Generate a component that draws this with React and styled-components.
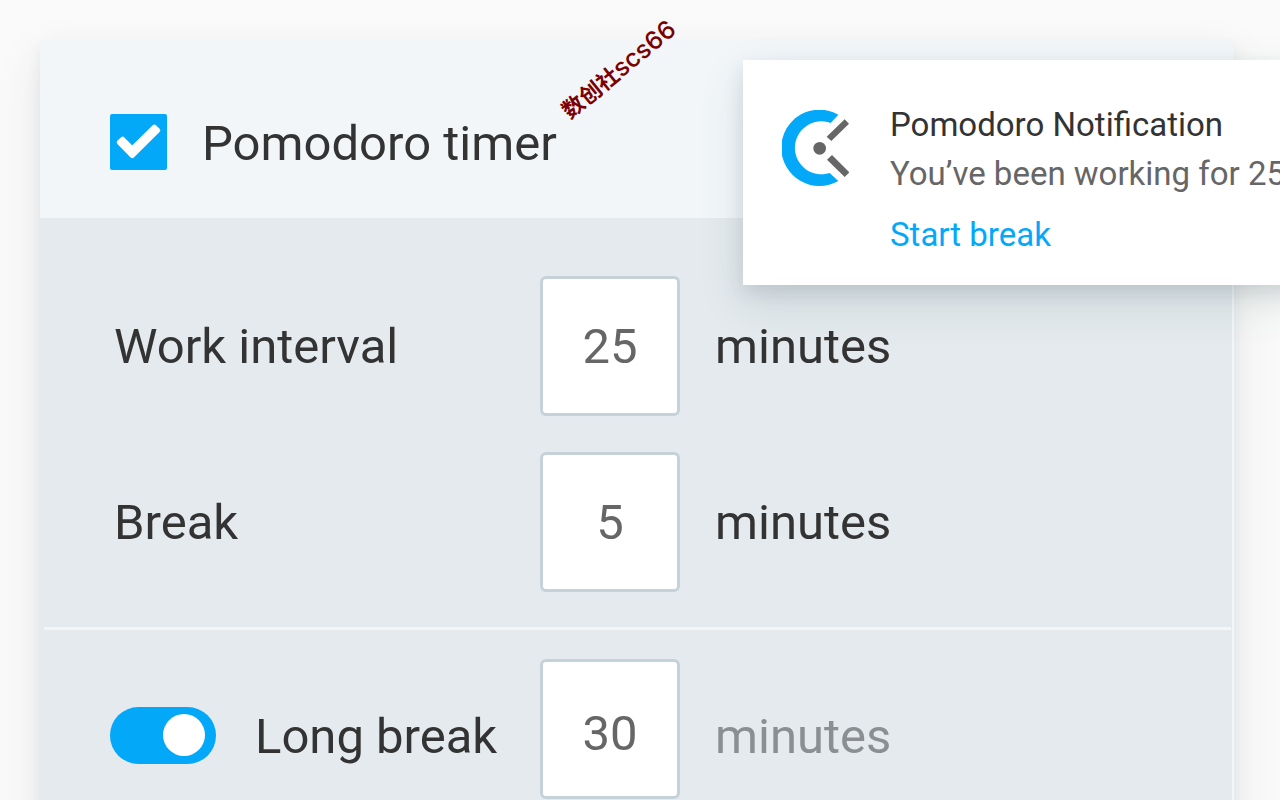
import React, { useState } from "react";
import styled, { createGlobalStyle } from "styled-components";

const COLORS = {
  primary: "#03a9f8",
  text: "#333333",
  muted: "#666666",
  panel: "#e4eaee",
  header: "#f2f6f9",
  border: "#c6d2d9",
};

const IntervalField = ({ id, value, onChange, low }) => {
  return (
    <NumberInput
      id={id}
      type="text"
      inputMode="numeric"
      value={value}
      $low={low}
      onChange={(e) => onChange(e.target.value)}
    />
  );
};

const ClockLogo = () => (
  <Logo viewBox="126 208 201 231" aria-hidden="true">
    <path
      d="M295 222A114.5 114.5 0 1 0 295 421L269 397A79.5 79.5 0 1 1 272 247Z"
      fill={COLORS.primary}
    />
    <path d="M314 236L327 249L274 301L260 288Z" fill={COLORS.muted} />
    <path d="M276 343L328 395L314 409L261 357Z" fill={COLORS.muted} />
    <circle cx="239" cy="323" r="19" fill={COLORS.muted} />
  </Logo>
);

const App = () => {
  const [enabled, setEnabled] = useState(true);
  const [longBreak, setLongBreak] = useState(true);
  const [work, setWork] = useState("25");
  const [rest, setRest] = useState("5");
  const [longRest, setLongRest] = useState("30");

  return (
    <Page>
      <GlobalStyle />
      <Card>
        <CardHeader>
          <CheckWrapper>
            <Checkbox
              id="pomodoro"
              type="checkbox"
              checked={enabled}
              onChange={() => setEnabled(!enabled)}
            />
            {enabled && (
              <Tick viewBox="271 281 170 170" aria-hidden="true">
                <path
                  d="M297 367L308 357L337 386L404 320L415 331L337 408Z"
                  fill="white"
                  stroke="white"
                  strokeWidth="14"
                  strokeLinejoin="round"
                />
              </Tick>
            )}
          </CheckWrapper>
          <Title htmlFor="pomodoro">Pomodoro timer</Title>
        </CardHeader>
        <Section>
          <Row>
            <LabelCell $indent>
              <label htmlFor="work">Work interval</label>
            </LabelCell>
            <IntervalField id="work" value={work} onChange={setWork} />
            <Unit>minutes</Unit>
          </Row>
          <Row>
            <LabelCell $indent>
              <label htmlFor="break">Break</label>
            </LabelCell>
            <IntervalField id="break" value={rest} onChange={setRest} />
            <Unit>minutes</Unit>
          </Row>
        </Section>
        <Divider />
        <Section $compact>
          <Row>
            <LabelCell $low>
              <Toggle
                id="long-toggle"
                type="checkbox"
                role="switch"
                aria-label="Long break"
                checked={longBreak}
                onChange={() => setLongBreak(!longBreak)}
              />
              <label htmlFor="long">Long break</label>
            </LabelCell>
            <IntervalField id="long" value={longRest} onChange={setLongRest} low />
            <Unit $low $faded>minutes</Unit>
          </Row>
        </Section>
      </Card>
      <Toast role="status">
        <ClockLogo />
        <ToastBody>
          <ToastTitle>Pomodoro Notification</ToastTitle>
          <ToastText>You’ve been working for 25 minutes</ToastText>
          <ToastAction type="button">Start break</ToastAction>
        </ToastBody>
      </Toast>
      <Watermark>
        <b>数创社</b>scs66
      </Watermark>
    </Page>
  );
};

const GlobalStyle = createGlobalStyle`
  * {
    box-sizing: border-box;
  }
  body {
    margin: 0;
    background: #fafafa;
    color: ${COLORS.text};
    font-family: Roboto, "Noto Sans CJK SC", sans-serif;
  }
`;

const Page = styled.main`
  position: relative;
  height: 100vh;
  padding: 40px 46px 0 40px;
  overflow: hidden;
`;

const Card = styled.section`
  background: ${COLORS.panel};
  box-shadow: 0 18px 44px rgba(40, 60, 50, 0.1), 0 8px 14px rgba(40, 50, 70, 0.06);
  border-right: 2px solid ${COLORS.header};
  font-size: 49px;
  line-height: 60px;
`;

const CardHeader = styled.header`
  display: flex;
  align-items: center;
  gap: 35px;
  height: 178px;
  padding: 26px 70px 0;
  background: ${COLORS.header};
`;

const CheckWrapper = styled.span`
  display: grid;
  width: 57px;
  height: 56px;
`;

const Checkbox = styled.input`
  appearance: none;
  grid-area: 1 / 1;
  margin: 0;
  border: 3px solid ${COLORS.primary};
  border-radius: 2px;
  background: white;
  &:checked {
    background: ${COLORS.primary};
  }
`;

const Tick = styled.svg`
  grid-area: 1 / 1;
  width: 57px;
  height: 56px;
  pointer-events: none;
`;

const Title = styled.label`
  padding-top: 3px;
  white-space: nowrap;
`;

const Section = styled.div`
  display: flex;
  flex-direction: column;
  gap: 36px;
  padding: ${(props) => (props.$compact ? "29px 70px 36px" : "58px 70px 35px")};
`;

const Row = styled.div`
  display: grid;
  grid-template-columns: 430px 140px 1fr;
  align-items: center;
`;

const LabelCell = styled.div`
  display: flex;
  align-items: center;
  gap: 36px;
  padding-left: ${(props) => (props.$indent ? "4px" : "0")};
  padding-top: ${(props) => (props.$low ? "12px" : "2px")};
  white-space: nowrap;
  label {
    padding-top: ${(props) => (props.$indent ? "0" : "4px")};
    padding-left: ${(props) => (props.$indent ? "0" : "3px")};
  }
`;

const NumberInput = styled.input`
  width: 140px;
  height: 140px;
  padding: ${(props) => (props.$low ? "8px 0 0" : "0")};
  border: 3px solid ${COLORS.border};
  border-radius: 6px;
  background: white;
  color: ${COLORS.muted};
  font: inherit;
  text-align: center;
`;

const Unit = styled.span`
  padding-left: 35px;
  padding-top: ${(props) => (props.$low ? "16px" : "2px")};
  color: ${(props) => (props.$faded ? "#8c8f91" : COLORS.text)};
`;

const Divider = styled.hr`
  height: 3px;
  margin: 0 1px 0 4px;
  border: none;
  background: ${COLORS.header};
`;

const Toggle = styled.input`
  appearance: none;
  display: flex;
  align-items: center;
  justify-content: flex-start;
  width: 106px;
  height: 57px;
  margin: 0;
  padding: 0 11px;
  border-radius: 29px;
  background: ${COLORS.border};
  &::before {
    content: "";
    width: 42px;
    height: 42px;
    border-radius: 50%;
    background: white;
  }
  &:checked {
    justify-content: flex-end;
    background: ${COLORS.primary};
  }
`;

const Toast = styled.aside`
  position: absolute;
  top: 60px;
  left: 743px;
  display: flex;
  align-items: flex-start;
  gap: 41px;
  height: 225px;
  padding: 40px 39px;
  background: white;
  box-shadow: 0 18px 44px rgba(40, 80, 70, 0.12), 0 8px 18px rgba(40, 50, 80, 0.12);
  white-space: nowrap;
`;

const Logo = styled.svg`
  flex: none;
  width: 67px;
  height: 77px;
  margin-top: 10px;
`;

const ToastBody = styled.div`
  display: flex;
  flex-direction: column;
  align-items: flex-start;
  font-size: 33px;
  line-height: 49px;
`;

const ToastTitle = styled.h2`
  margin: 0;
  font-size: 33px;
  font-weight: 400;
`;

const ToastText = styled.p`
  margin: 0;
  color: ${COLORS.muted};
`;

const ToastAction = styled.button`
  margin-top: 12px;
  padding: 0;
  border: none;
  background: none;
  color: ${COLORS.primary};
  font: inherit;
  cursor: pointer;
`;

const Watermark = styled.span`
  position: absolute;
  top: 55px;
  left: 549px;
  color: #7b0000;
  font-family: Inter, "Noto Sans CJK SC", sans-serif;
  font-size: 25px;
  font-weight: 500;
  line-height: 28px;
  white-space: nowrap;
  transform: rotate(-39deg);
  pointer-events: none;
  b {
    font-size: 22px;
    font-weight: 700;
  }
`;

export default App;
